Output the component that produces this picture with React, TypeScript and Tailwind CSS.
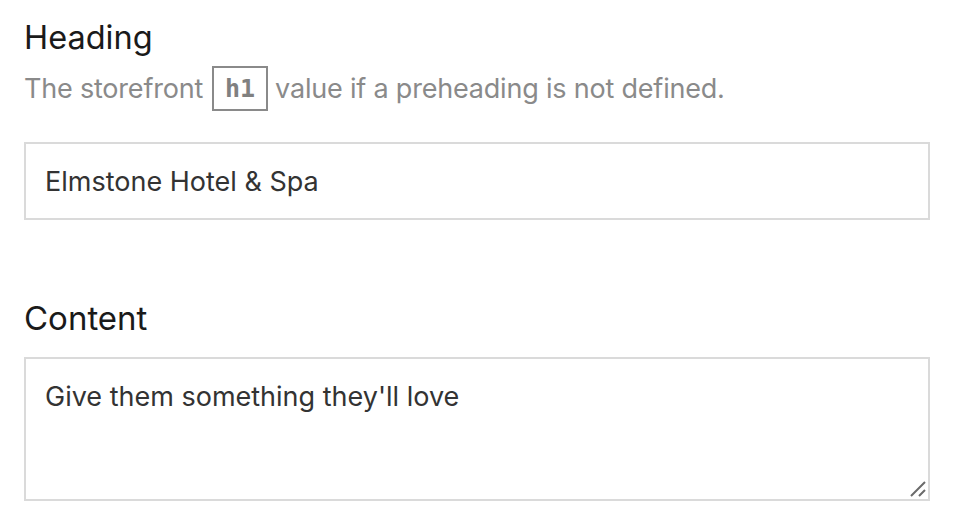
export default function App() {
  return (
    <div className="min-h-[528px] bg-white px-[24px] pt-[16px] font-['Inter',sans-serif]">
      {/* Heading field */}
      <div>
        <label className="block text-[32.5px] leading-[44px] text-[#1a1a1a]">Heading</label>
        <p className="mt-[6px] flex items-center text-[27px] leading-[44px] tracking-[-0.2px] text-[#8a8a8a]">
          The storefront
          <code className="ml-[9px] mr-[7px] inline-flex h-[45px] w-[56px] items-center justify-center border-2 border-[#8a8a8a] font-['DejaVu_Sans_Mono',monospace] text-[25px] font-bold tracking-normal text-[#808080]">
            h1
          </code>
          value if a preheading is not defined.
        </p>
        <input
          className="mt-[31px] block h-[78px] w-[906px] border-2 border-[#dadada] px-[19px] text-[27px] text-[#333] outline-none"
          defaultValue="Elmstone Hotel & Spa"
        />
      </div>

      {/* Content field */}
      <div className="mt-[76px]">
        <label className="block text-[33px] leading-[44px] text-[#1a1a1a]">Content</label>
        <div className="relative mt-[17px] w-[906px]">
          <textarea
            className="block h-[144px] w-full resize-none border-2 border-[#dadada] px-[19px] pt-[18px] text-[27px] leading-[40px] text-[#333] outline-none"
            defaultValue="Give them something they'll love"
          />
          {/* resize grip */}
          <svg className="absolute bottom-[4px] right-[4px]" width="16" height="16" viewBox="0 0 16 16" fill="none" stroke="#6b6b6b" strokeWidth="2">
            <path d="M1 15L15 1M9 15L15 9" />
          </svg>
        </div>
      </div>
    </div>
  );
}
